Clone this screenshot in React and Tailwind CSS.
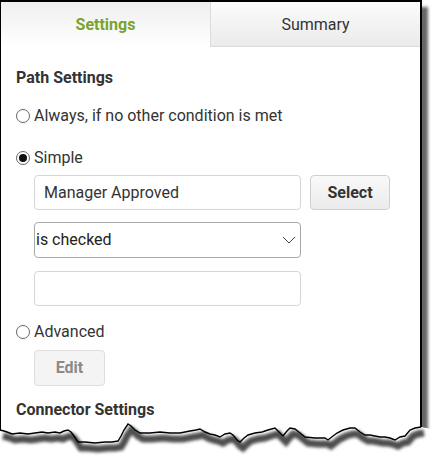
import React from 'react'

const jag = [
  [0, 50], [4, 51], [7, 52], [12, 54], [20, 53], [28, 54], [35, 53], [42, 52], [48, 53], [55, 52],
  [60, 53], [64, 51], [68, 50], [71, 52], [74, 56], [78, 62], [85, 62], [95, 63], [105, 62], [112, 62],
  [118, 61], [121, 56], [124, 50], [128, 44], [131, 46], [135, 50], [140, 53], [150, 53], [160, 52],
  [170, 53], [180, 53], [190, 51], [196, 50], [200, 49], [205, 52], [210, 54], [215, 55], [220, 57],
  [225, 54], [230, 53], [233, 55], [237, 60], [240, 62], [244, 58], [248, 55], [255, 53], [262, 52],
  [268, 50], [275, 48], [279, 52], [283, 56], [287, 51], [290, 48], [295, 49], [300, 53], [305, 57],
  [315, 58], [325, 58], [328, 60], [333, 56], [337, 53], [343, 50], [350, 48], [355, 48], [360, 52],
  [365, 55], [370, 55], [375, 56], [380, 57], [385, 57], [390, 58], [395, 60], [400, 57], [405, 56],
  [410, 50], [415, 48], [421, 47],
]

const line = jag.map(p => p.join(',')).join(' ')
const shadowLine = jag.map(([x, y]) => `${x + 3},${y + 6}`).join(' ')
const cover = `${line} 437,50 437,87 0,87`

function Radio({ checked, label }) {
  return (
    <div className="flex items-center h-[30px] pt-[1px]">
      <span className="w-[14px] h-[14px] rounded-full border border-[#666] bg-white flex items-center justify-center">
        {checked && <span className="w-[8px] h-[8px] rounded-full bg-[#111]" />}
      </span>
      <span className="ml-[4px] text-[16px] text-[#333]">{label}</span>
    </div>
  )
}

export default function App() {
  return (
    <div className="relative w-[437px] h-[467px] bg-white overflow-hidden" style={{ fontFamily: 'Roboto, "Liberation Sans", sans-serif' }}>
      <div className="w-[422px] h-[445px] border-t-2 border-l border-r-2 border-black bg-white shadow-[6px_7px_3px_rgba(0,0,0,0.6)]">
        <div className="flex h-[45px]">
          <div className="w-[209px] flex items-center justify-center pt-[1px] bg-linear-to-b from-[#efefef] to-white text-[16px] font-bold text-[#7aa32c]">
            Settings
          </div>
          <div className="flex-1 flex items-center justify-center pt-[1px] border-l border-b border-[#dcdcdc] bg-linear-to-b from-[#fbfbfb] to-[#ebebeb] text-[16px] text-[#333]">
            Summary
          </div>
        </div>

        <div className="pl-[15px]">
          <div className="mt-[16px] h-[30px] flex items-center text-[16px] font-bold text-[#333]">Path Settings</div>
          <div className="mt-[7px]"><Radio label="Always, if no other condition is met" /></div>
          <div className="mt-[12px]"><Radio checked label="Simple" /></div>

          <div className="pl-[18px]">
            <div className="mt-[3px] flex">
              <div className="w-[267px] h-[35px] border border-[#d6d6d6] rounded-[4px] flex items-center pl-[9px] text-[16px] text-[#333]">
                Manager Approved
              </div>
              <button className="ml-[9px] w-[80px] h-[35px] border border-[#cfcfcf] rounded-[4px] bg-linear-to-b from-[#f9f9f9] to-[#ebebeb] text-[16px] font-bold text-[#333]">
                Select
              </button>
            </div>
            <div className="mt-[12px] w-[267px] h-[36px] border border-[#a9a9a9] rounded-[4px] flex items-center justify-between pl-[1px] pr-[4px] text-[16px] text-[#222]">
              <span>is checked</span>
              <svg width="14" height="8" viewBox="0 0 14 8" fill="none">
                <path d="M1 1 L7 7 L13 1" stroke="#444" strokeWidth="1" />
              </svg>
            </div>
            <div className="mt-[13px] w-[267px] h-[35px] border border-[#d6d6d6] rounded-[4px]" />
          </div>

          <div className="mt-[10px]"><Radio label="Advanced" /></div>
          <div className="pl-[18px] mt-[4px]">
            <button className="w-[71px] h-[36px] border border-[#dddddd] rounded-[4px] bg-[#f4f4f4] text-[16px] font-bold text-[#8a8a8a]">
              Edit
            </button>
          </div>
          <div className="mt-[9px] h-[30px] flex items-center text-[16px] font-bold text-[#333]">Connector Settings</div>
        </div>
      </div>

      <svg className="absolute left-0 top-[380px]" width="437" height="87" viewBox="0 0 437 87">
        <defs>
          <filter id="blur" x="-10%" y="-50%" width="120%" height="200%">
            <feGaussianBlur stdDeviation="1.5" />
          </filter>
        </defs>
        <polygon points={cover} fill="#fff" />
        <polyline points={shadowLine} fill="none" stroke="#3a3a3a" strokeWidth="7" filter="url(#blur)" opacity="0.9" />
        <polyline points={line} fill="none" stroke="#000" strokeWidth="1.4" />
      </svg>
    </div>
  )
}
